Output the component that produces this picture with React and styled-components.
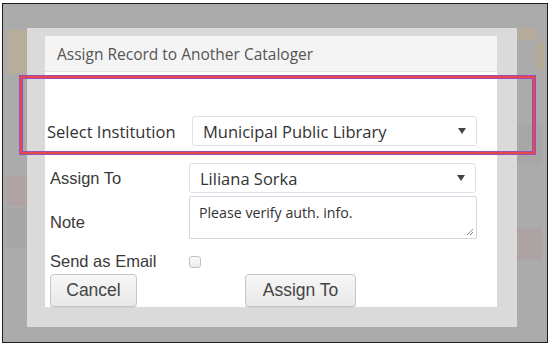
import styled, { createGlobalStyle } from "styled-components"

const GlobalStyle = createGlobalStyle`
    html, body {
        margin: 0;
        padding: 0;
        background: #ffffff;
    }
    * {
        box-sizing: border-box;
    }
`

const Frame = styled.div`
    position: relative;
    margin: 3px 0 0 2px;
    width: 546px;
    height: 340px;
    border: 1px solid #1e1e1e;
    display: flex;
    padding: 24px 30px 15px 24px;
    background:
        linear-gradient(#b6ad9a, #b6ad9a) 4px 26px / 20px 44px no-repeat,
        linear-gradient(#b0a3a3, #b0a3a3) 4px 172px / 20px 30px no-repeat,
        linear-gradient(#a6a6a6, #a6a6a6) 4px 204px / 20px 40px no-repeat,
        linear-gradient(#b5ac9b, #b5ac9b) 513px 24px / 20px 12px no-repeat,
        linear-gradient(#b4ab9a, #b4ab9a) 533px 38px / 8px 28px no-repeat,
        linear-gradient(#aea3a3, #aea3a3) 513px 224px / 26px 32px no-repeat,
        linear-gradient(#a7a7a7, #a7a7a7) 513px 120px / 26px 40px no-repeat,
        #ababab;
`

const ModalFrame = styled.div`
    flex: 1;
    background: #dadada;
    padding: 8px 20px 20px 18px;
    display: flex;
`

const Dialog = styled.div`
    flex: 1;
    background: #ffffff;
    display: flex;
    flex-direction: column;
`

const Header = styled.div`
    height: 36px;
    padding: 0 12px;
    display: flex;
    align-items: center;
    background: #f4f4f4;
    border-bottom: 1px solid #e4e4e4;
    font-family: "Open Sans", sans-serif;
    font-size: 15.5px;
    color: #555555;
`

const Body = styled.div`
    display: grid;
    grid-template-columns: 139px 288px;
    align-items: center;
    padding-left: 5px;
`

const InstitutionRow = styled.div`
    grid-column: 1 / span 2;
    display: flex;
    align-items: center;
    margin: 44px 0 17px -3px;
`

const BigLabel = styled.div`
    width: 146px;
    font-family: "Open Sans", sans-serif;
    font-size: 16.5px;
    color: #333333;
`

const Label = styled.div`
    font-family: "Liberation Sans", Arial, sans-serif;
    font-size: 16.5px;
    color: #3a3a3a;
`

const SelectBox = styled.div`
    position: relative;
    width: ${p => p.$width}px;
    height: ${p => p.$height}px;
    display: flex;
    align-items: center;
    padding: 0 10px;
    border: 1px solid #dde1e6;
    border-radius: 3px;
    background: #ffffff;
    font-family: "Open Sans", sans-serif;
    font-size: ${p => p.$size}px;
    color: #333333;
    svg {
        margin-left: auto;
    }
`

const NoteBox = styled.div`
    position: relative;
    width: 288px;
    height: 43px;
    margin: 3px 0 13px;
    padding: 6px 9px;
    border: 1px solid #cfd6de;
    border-radius: 2px;
    font-family: "Open Sans", sans-serif;
    font-size: 14.2px;
    color: #333333;
    svg {
        position: absolute;
        right: 2px;
        bottom: 2px;
    }
`

const CheckBox = styled.div`
    width: 12px;
    height: 12px;
    border: 1px solid #c2c2c2;
    border-radius: 3px;
    background: linear-gradient(#fbfbfb, #ececec);
`

const ButtonRow = styled.div`
    grid-column: 1 / span 2;
    display: flex;
    gap: 108px;
    margin-top: 3px;
`

const Button = styled.button`
    width: ${p => p.$width}px;
    height: 33px;
    padding: 0;
    border: 1px solid #c6c6c6;
    border-radius: 4px;
    background: linear-gradient(#f7f7f7, #e8e8e8);
    box-shadow: 0 1px 0 #d0d0d0;
    font-family: "Liberation Sans", Arial, sans-serif;
    font-size: 17.5px;
    color: #444444;
`

const Highlight = styled.div`
    position: absolute;
    left: 17px;
    top: 72px;
    width: 515px;
    height: 78px;
    border: 2px solid #e8474b;
    box-shadow: 0 0 0 1px #9a4fb6, inset 0 0 0 1px #9a4fb6;
    pointer-events: none;
`

const Arrow = () => (
    <svg width="8" height="6" viewBox="0 0 8 6">
        <polygon points="0,0 8,0 4,6" fill="#444" />
    </svg>
)

const Grip = () => (
    <svg width="8" height="8" viewBox="0 0 8 8">
        <path d="M1 7 L7 1 M4 7 L7 4" stroke="#888" strokeWidth="1" />
    </svg>
)

const App = () => {
    return (
        <>
            <GlobalStyle />
            <Frame>
                <ModalFrame>
                    <Dialog>
                        <Header>Assign Record to Another Cataloger</Header>
                        <Body>
                            <InstitutionRow>
                                <BigLabel>Select Institution</BigLabel>
                                <SelectBox $width={287} $height={30} $size={16.5}>
                                    Municipal Public Library
                                    <Arrow />
                                </SelectBox>
                            </InstitutionRow>
                            <Label>Assign To</Label>
                            <SelectBox $width={287} $height={30} $size={16.5}>
                                Liliana Sorka
                                <Arrow />
                            </SelectBox>
                            <Label>Note</Label>
                            <NoteBox>
                                Please verify auth. info.
                                <Grip />
                            </NoteBox>
                            <Label>Send as Email</Label>
                            <CheckBox />
                            <ButtonRow>
                                <Button $width={87}>Cancel</Button>
                                <Button $width={111}>Assign To</Button>
                            </ButtonRow>
                        </Body>
                    </Dialog>
                </ModalFrame>
                <Highlight />
            </Frame>
        </>
    )
}

export default App
